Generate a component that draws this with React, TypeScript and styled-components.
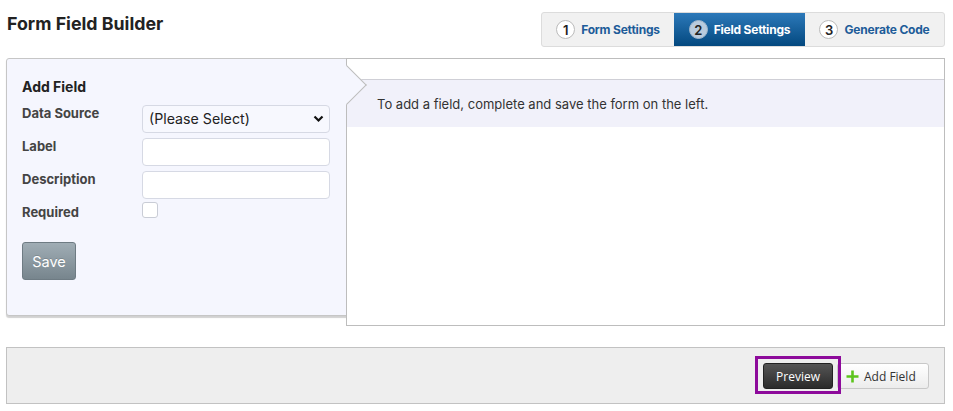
import React from "react";
import styled, { createGlobalStyle } from "styled-components";

const Global = createGlobalStyle`
  html, body { margin: 0; padding: 0; background: #fff; }
  body { font-family: Inter, "Noto Sans", Arial, sans-serif; color: #222; }
  * { box-sizing: border-box; }
`;

const Page = styled.div`
  width: 953px;
  padding: 12px 8px 0 6px;
`;

const Header = styled.div`
  display: flex;
  justify-content: space-between;
  align-items: flex-start;
  height: 46px;
`;

const Title = styled.h1`
  margin: 1px 0 0 1px;
  font-size: 17.8px;
  font-weight: 700;
  color: #222;
  line-height: 22px;
`;

const Tabs = styled.div`
  display: flex;
  height: 35px;
  border: 1px solid #dcdcdc;
  border-radius: 3px;
  background: #f1f1f1;
  overflow: hidden;
`;

const Tab = styled.div<{ $active?: boolean; $w: number }>`
  width: ${(p) => p.$w}px;
  display: flex;
  align-items: center;
  justify-content: center;
  gap: 6px;
  font-size: 12px;
  font-weight: 700;
  letter-spacing: -0.2px;
  color: ${(p) => (p.$active ? "#fff" : "#1d5c99")};
  background: ${(p) => (p.$active ? "linear-gradient(#2c79b9, #03487f)" : "transparent")};
`;

const Num = styled.span<{ $active?: boolean }>`
  width: 19px;
  height: 19px;
  border-radius: 50%;
  display: flex;
  align-items: center;
  justify-content: center;
  font-size: 13px;
  font-weight: 600;
  color: #222;
  background: ${(p) => (p.$active ? "#b9cbdd" : "#fff")};
  border: 1px solid ${(p) => (p.$active ? "#9fb6cc" : "#bbb")};
`;

const Main = styled.div`
  display: flex;
  align-items: flex-start;
`;

const LeftPanel = styled.div`
  width: 341px;
  height: 258px;
  background: #f5f6fe;
  border: 1px solid #c6c6c6;
  border-radius: 3px 0 0 3px;
  box-shadow: 0 2px 1px rgba(0, 0, 0, 0.18);
  padding: 19px 16px 0 15px;
`;

const PanelTitle = styled.h2`
  margin: 0 0 7px 0;
  font-size: 14px;
  font-weight: 700;
  color: #222;
  line-height: 17px;
`;

const FieldRow = styled.div`
  display: flex;
  align-items: center;
  height: 33px;
`;

const Label = styled.label`
  width: 120px;
  font-size: 13px;
  font-weight: 700;
  color: #444;
  align-self: flex-start;
  padding-top: 3px;
`;

const inputBase = `
  width: 188px;
  height: 28px;
  border: 1px solid #d6d9e4;
  border-radius: 4px;
  background: #fff;
`;

const Select = styled.div`
  ${inputBase}
  display: flex;
  align-items: center;
  justify-content: space-between;
  padding: 0 5px 0 6px;
  font-size: 14.2px;
  color: #222;
  background: #f7f8fe;
`;

const TextInput = styled.div`
  ${inputBase}
`;

const Checkbox = styled.div`
  width: 16px;
  height: 16px;
  border: 1px solid #c9ccd6;
  border-radius: 3px;
  background: #fff;
  align-self: flex-start;
  margin-top: 1px;
`;

const SaveButton = styled.button`
  margin-top: 8px;
  width: 54px;
  height: 38px;
  border: 1px solid #6e7b83;
  border-radius: 3px;
  background: linear-gradient(#a0adb5, #77858d);
  color: #fff;
  font-family: Inter, Arial, sans-serif;
  font-size: 14.5px;
  text-shadow: 0 -1px 0 rgba(0, 0, 0, 0.15);
`;

const RightPanel = styled.div`
  position: relative;
  flex: 1;
  margin-left: -1px;
  height: 268px;
  background: #fff;
  border: 1px solid #bdbdbd;
  padding-top: 20px;
  &::before {
    content: "";
    position: absolute;
    left: -14px;
    top: 12px;
    width: 27px;
    height: 27px;
    transform: rotate(45deg);
    background: #f5f6fe;
    border-top: 1px solid #bdbdbd;
    border-right: 1px solid #bdbdbd;
    z-index: 2;
  }
`;

const Message = styled.div`
  height: 48px;
  background: #f1f1fa;
  border-top: 1px solid #cfcfd6;
  display: flex;
  align-items: center;
  padding-left: 30px;
  font-size: 13px;
  color: #333;
`;

const BottomBar = styled.div`
  margin-top: 21px;
  height: 57px;
  background: #eeeeee;
  border: 1px solid #c2c2c2;
  display: flex;
  justify-content: flex-end;
  align-items: flex-start;
  gap: 4px;
  padding: 15px 15px 0 0;
`;

const PreviewButton = styled.button`
  position: relative;
  width: 70px;
  height: 26px;
  border: 1px solid #222;
  border-radius: 3px;
  background: linear-gradient(#555, #2b2b2b);
  color: #fff;
  font-family: "Open Sans", "Segoe UI", Arial, sans-serif;
  font-size: 12px;
  &::after {
    content: "";
    position: absolute;
    left: -9px;
    right: -9px;
    top: -8px;
    bottom: -6px;
    border: 3px solid #8d0a9b;
    pointer-events: none;
  }
`;

const AddButton = styled.button`
  display: flex;
  align-items: center;
  gap: 5px;
  width: 92px;
  height: 26px;
  padding: 0 0 0 8px;
  border: 1px solid #c8c8c8;
  border-radius: 3px;
  background: linear-gradient(#ffffff, #ececec);
  color: #333;
  font-family: "Open Sans", "Segoe UI", Arial, sans-serif;
  font-size: 12px;
`;

export default function App() {
  return (
    <>
      <Global />
      <Page>
        <Header>
          <Title>Form Field Builder</Title>
          <Tabs>
            <Tab $w={132}>
              <Num>1</Num>Form Settings
            </Tab>
            <Tab $w={131} $active>
              <Num $active>2</Num>Field Settings
            </Tab>
            <Tab $w={139}>
              <Num>3</Num>Generate Code
            </Tab>
          </Tabs>
        </Header>
        <Main>
          <LeftPanel>
            <PanelTitle>Add Field</PanelTitle>
            <FieldRow>
              <Label>Data Source</Label>
              <Select>
                <span>(Please Select)</span>
                <svg width="11" height="8" viewBox="0 0 11 8">
                  <path d="M1.5 1.5 L5.5 5.5 L9.5 1.5" fill="none" stroke="#111" strokeWidth="2.2" />
                </svg>
              </Select>
            </FieldRow>
            <FieldRow>
              <Label>Label</Label>
              <TextInput />
            </FieldRow>
            <FieldRow>
              <Label>Description</Label>
              <TextInput />
            </FieldRow>
            <FieldRow>
              <Label>Required</Label>
              <Checkbox />
            </FieldRow>
            <SaveButton>Save</SaveButton>
          </LeftPanel>
          <RightPanel>
            <Message>To add a field, complete and save the form on the left.</Message>
          </RightPanel>
        </Main>
        <BottomBar>
          <PreviewButton>Preview</PreviewButton>
          <AddButton>
            <svg width="13" height="13" viewBox="0 0 13 13">
              <path d="M6.5 0.5 V12.5 M0.5 6.5 H12.5" stroke="#5cc41c" strokeWidth="2.6" />
            </svg>
            Add Field
          </AddButton>
        </BottomBar>
      </Page>
    </>
  );
}
